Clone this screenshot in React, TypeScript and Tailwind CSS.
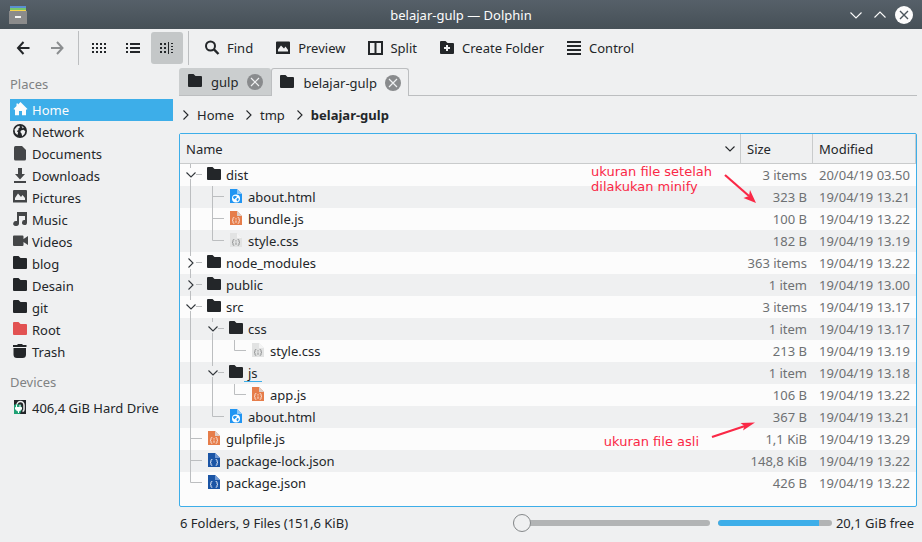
import { useState, type ReactNode } from 'react'
import clsx from 'clsx'

type IconName = 'folder' | 'rootFolder' | 'html' | 'js' | 'css' | 'json'
// one guide cell per indent level
type Guide = 'line' | 'tee' | 'end' | 'open' | 'closed'

interface FileRow {
  id: string
  guides: Guide[]
  icon: IconName
  name: string
  size: string
  modified: string
}

const FILES: FileRow[] = [
  { id: 'dist', guides: ['open'], icon: 'folder', name: 'dist', size: '3 items', modified: '20/04/19 03.50' },
  { id: 'dist/about', guides: ['line', 'tee'], icon: 'html', name: 'about.html', size: '323 B', modified: '19/04/19 13.21' },
  { id: 'dist/bundle', guides: ['line', 'tee'], icon: 'js', name: 'bundle.js', size: '100 B', modified: '19/04/19 13.22' },
  { id: 'dist/style', guides: ['line', 'end'], icon: 'css', name: 'style.css', size: '182 B', modified: '19/04/19 13.19' },
  { id: 'node_modules', guides: ['closed'], icon: 'folder', name: 'node_modules', size: '363 items', modified: '19/04/19 13.22' },
  { id: 'public', guides: ['closed'], icon: 'folder', name: 'public', size: '1 item', modified: '19/04/19 13.00' },
  { id: 'src', guides: ['open'], icon: 'folder', name: 'src', size: '3 items', modified: '19/04/19 13.17' },
  { id: 'src/css', guides: ['line', 'open'], icon: 'folder', name: 'css', size: '1 item', modified: '19/04/19 13.17' },
  { id: 'src/css/style', guides: ['line', 'line', 'end'], icon: 'css', name: 'style.css', size: '213 B', modified: '19/04/19 13.19' },
  { id: 'src/js', guides: ['line', 'open'], icon: 'folder', name: 'js', size: '1 item', modified: '19/04/19 13.18' },
  { id: 'src/js/app', guides: ['line', 'line', 'end'], icon: 'js', name: 'app.js', size: '106 B', modified: '19/04/19 13.22' },
  { id: 'src/about', guides: ['line', 'end'], icon: 'html', name: 'about.html', size: '367 B', modified: '19/04/19 13.21' },
  { id: 'gulpfile', guides: ['tee'], icon: 'js', name: 'gulpfile.js', size: '1,1 KiB', modified: '19/04/19 13.29' },
  { id: 'package-lock', guides: ['tee'], icon: 'json', name: 'package-lock.json', size: '148,8 KiB', modified: '19/04/19 13.22' },
  { id: 'package', guides: ['end'], icon: 'json', name: 'package.json', size: '426 B', modified: '19/04/19 13.22' },
]

function Svg({ children, className }: { children: ReactNode; className?: string }) {
  return (
    <svg viewBox="0 0 16 16" className={clsx('size-4 shrink-0', className)} fill="currentColor" aria-hidden="true">
      {children}
    </svg>
  )
}

function FolderIcon({ className }: { className?: string }) {
  return (
    <Svg className={className}>
      <path d="M1 1a1 1 0 0 1 1-1h4.500l2 2H14a1 1 0 0 1 1 1v9a1 1 0 0 1-1 1H2a1 1 0 0 1-1-1z" />
    </Svg>
  )
}

function PageIcon({ color, fold, children }: { color: string; fold: string; children: ReactNode }) {
  return (
    <Svg>
      <path d="M2 0h7l5 5v9H2z" fill={color} />
      <path d="M9 0l5 5H9z" fill={fold} />
      {children}
    </Svg>
  )
}

function Braces({ color, dot }: { color: string; dot?: boolean }) {
  return (
    <g fill="none" stroke={color} strokeWidth="1">
      <path d="M6.300 6.500h-.6q-.7 0-.7.800v1q0 .9-1 1.100 1 .2 1 1.100v1q0 .8.700.8h.6" />
      <path d="M9.700 6.500h.6q.7 0 .7.800v1q0 .9 1 1.100-1 .2-1 1.100v1q0 .8-.7.800h-.6" />
      {dot && <path d="M8 7.200v1.300M8 9.500v2.300" />}
    </g>
  )
}

function FileIcon({ name }: { name: IconName }) {
  switch (name) {
    case 'html':
      return (
        <PageIcon color="#2195f2" fold="#8ec8f8">
          <circle cx="8" cy="9.500" r="4" fill="#fff" />
          <path d="M5.300 7.500l1.700-.7 1.800.5-.4 1.400-1.300.5.2 1.100-1.300-.3-1-1.200zM9.300 8.900l1.500.5-.2 1.700-1.500 1.300-.7-1.800z" fill="#2195f2" />
        </PageIcon>
      )
    case 'js':
      return (
        <PageIcon color="#e67d4a" fold="#dccfc9">
          <Braces color="#fbe3d8" dot />
        </PageIcon>
      )
    case 'css':
      return (
        <PageIcon color="#e2e3e3" fold="#f4f4f4">
          <Braces color="#8f9091" dot />
        </PageIcon>
      )
    case 'json':
      return (
        <PageIcon color="#1b55a5" fold="#6f98d3">
          <Braces color="#e8effa" />
        </PageIcon>
      )
    case 'rootFolder':
      return <FolderIcon className="text-[#e25252]" />
    default:
      return <FolderIcon className="text-[#232629]" />
  }
}

function PictureIcon() {
  return (
    <Svg>
      <path fillRule="evenodd" d="M1 2.500q0-1 1-1h12q1 0 1 1V14H1zM3 11.500h10V10L10.500 6.500 9 8.500l-3-3-3 4z" />
    </Svg>
  )
}

function ChevronIcon({ d }: { d: string }) {
  return (
    <svg viewBox="0 0 12 12" className="size-3 shrink-0" fill="none" stroke="currentColor" aria-hidden="true">
      <path d={d} strokeWidth="1.100" />
    </svg>
  )
}

function TreeGuide({ kind }: { kind: Guide }) {
  const lines: Record<Guide, string> = {
    line: 'M10.500 0V22',
    tee: 'M10.500 0V22M11 10.500H22',
    end: 'M10.500 0V10.500H22',
    open: 'M10.500 0V4M10.500 15V22M16 10.500H22',
    closed: 'M10.500 0V4M10.500 17V22M16 10.500H22',
  }
  return (
    <svg viewBox="0 0 22 22" className="h-[22px] w-[22px] shrink-0" fill="none" aria-hidden="true">
      <path d={lines[kind]} stroke="#bcbec0" />
      {kind === 'open' && <path d="M6.500 8.500l4.500 4.500 4.500-4.500" stroke="#31363b" strokeWidth="1.100" />}
      {kind === 'closed' && <path d="M8.500 6.500L13 11l-4.500 4.500" stroke="#31363b" strokeWidth="1.100" />}
    </svg>
  )
}

const PLACES: { name: string; icon: ReactNode }[] = [
  { name: 'Home', icon: <Svg><path d="M8.500 0l7 7-.8.800-.7-.6V13.200h-4V9H7v4.200H3V7.200l-.7.600L1.500 7l3-3V1.500H6V2.500z" /></Svg> },
  {
    name: 'Network',
    icon: (
      <Svg className="text-[#232629]">
        <circle cx="8" cy="7" r="7" />
        <path d="M2.500 5.500L5 2.500l2.500-.7.300 1.700-1.600 1.200.4 1.400L4.800 7l1.300 1.500-.6 2.500L3.200 9zM9.500 2l2.300 1.300-1 1.200zM9 6.500l2.500-.8 1.800 1.500-.8 2.800-2.300 2.200-.7-2.700L8.300 8z" fill="#eff0f1" />
      </Svg>
    ),
  },
  { name: 'Documents', icon: <Svg><path d="M2 1.500Q2 0 3.500 0H10l4 4v9q0 1.500-1.500 1.500h-9Q2 14.500 2 13z" /></Svg> },
  { name: 'Downloads', icon: <Svg><path d="M6 0h4v6h3L8 11.500 3 6h3zM2 13h12v2H2z" /></Svg> },
  { name: 'Pictures', icon: <Svg><path fillRule="evenodd" d="M1 1q0-1 1-1h12q1 0 1 1v11.500H1zM3 10h10V8L10.500 5 9 7 6 3.500 3 8z" /></Svg> },
  { name: 'Music', icon: <Svg><path d="M5 0h10v10.500a2.500 2.500 0 1 1-2-2.400V4H7v7.500a2.900 2.500 0 1 1-2-2.400z" /></Svg> },
  { name: 'Videos', icon: <Svg><path d="M1 2.500q0-1 1-1h8.500q1 0 1 1V5L16 2v9l-4.500-3v3q0 1-1 1H2q-1 0-1-1z" /></Svg> },
  { name: 'blog', icon: <FileIcon name="folder" /> },
  { name: 'Desain', icon: <FileIcon name="folder" /> },
  { name: 'git', icon: <FileIcon name="folder" /> },
  { name: 'Root', icon: <FileIcon name="rootFolder" /> },
  { name: 'Trash', icon: <Svg className="text-[#232629]"><path d="M1 1h4l1-1h4l1 1h3.500v2H1zM1.500 4h12.500v6.500Q14 14 10.500 14H5Q1.500 14 1.500 10.500z" /></Svg> },
]

function TitleBar() {
  return (
    <header className="grid h-[29px] grid-cols-[1fr_auto_1fr] items-center bg-linear-to-b from-[#566069] to-[#465057] px-[9px] text-[#fcfcfc]">
      <svg viewBox="0 0 18 18" className="size-[18px]" aria-hidden="true">
        <path d="M1 0h16v3H1z" fill="#5a8fd0" />
        <path d="M1 2h16v2H1z" fill="#77c66a" />
        <path d="M1 4h16v2H1z" fill="#f5d44c" />
        <path d="M0 5h18v13H0z" fill="#8b8b8b" />
        <path d="M6 10h6v2H6z" fill="#f4f4f4" />
      </svg>
      <h1>belajar-gulp — Dolphin</h1>
      <div className="flex items-center justify-end gap-3">
        <button type="button" aria-label="Minimize"><ChevronIcon d="M.5 3.500L6 9l5.500-5.500" /></button>
        <button type="button" aria-label="Maximize"><ChevronIcon d="M.5 8.500L6 3l5.500 5.500" /></button>
        <button type="button" aria-label="Close" className="-ml-[3px]">
          <svg viewBox="0 0 18 18" className="size-[18px]" aria-hidden="true">
            <circle cx="9" cy="9" r="9" fill="#fcfcfc" />
            <path d="M5 5l8 8M13 5l-8 8" stroke="#4b555c" strokeWidth="1.400" />
          </svg>
        </button>
      </div>
    </header>
  )
}

function ToolIconButton({ label, active, onClick, className, children }: { label: string; active?: boolean; onClick?: () => void; className?: string; children: ReactNode }) {
  return (
    <button
      type="button"
      aria-label={label}
      onClick={onClick}
      className={clsx('flex size-8 items-center justify-center rounded-[3px]', active && 'bg-[#c4c7c8]', className)}
    >
      {children}
    </button>
  )
}

function ToolButton({ label, icon }: { label: string; icon: ReactNode }) {
  return (
    <button type="button" className="flex h-8 items-center gap-[7px] px-[11px]">
      {icon}
      {label}
    </button>
  )
}

function Toolbar() {
  const [view, setView] = useState('details')
  return (
    <nav aria-label="Toolbar" className="flex h-[39px] items-center pb-[1px] pl-[7px]">
      <div className="flex gap-[2px]">
        <ToolIconButton label="Back">
          <Svg><path d="M8.500 2L3 8l5.500 6M3 8h11.500" fill="none" stroke="currentColor" strokeWidth="2" /></Svg>
        </ToolIconButton>
        <ToolIconButton label="Forward" className="text-[#8b8e90]">
          <Svg><path d="M8 2l5.500 6L8 14M13.500 8H2" fill="none" stroke="currentColor" strokeWidth="2" /></Svg>
        </ToolIconButton>
      </div>
      <div className="mr-1 ml-[5px] h-[34px] w-px bg-[#bcbec0]" />
      <div className="flex gap-[2px]">
        <ToolIconButton label="Icons" active={view === 'icons'} onClick={() => setView('icons')}>
          <Svg>
            <path d="M1 4h15M1 8h15M1 12h15" stroke="currentColor" strokeWidth="2" strokeDasharray="2 2" />
          </Svg>
        </ToolIconButton>
        <ToolIconButton label="Compact" active={view === 'compact'} onClick={() => setView('compact')}>
          <Svg><path d="M1 3h2v2H1zM5 3h10v2H5zM1 7h2v2H1zM5 7h10v2H5zM1 11h2v2H1zM5 11h10v2H5z" /></Svg>
        </ToolIconButton>
        <ToolIconButton label="Details" active={view === 'details'} onClick={() => setView('details')}>
          <Svg>
            <path d="M1 4h7M1 8h7M1 12h7" stroke="currentColor" strokeWidth="2" strokeDasharray="2 2" />
            <path d="M9 2h1v12H9zM12 3h2v1h-2zM12 6h2v1h-2zM12 9h2v1h-2zM12 12h2v1h-2z" />
          </Svg>
        </ToolIconButton>
      </div>
      <div className="mr-1 ml-[5px] h-[34px] w-px bg-[#bcbec0]" />
      <ToolButton
        label="Find"
        icon={<Svg><circle cx="6.500" cy="6" r="4.500" fill="none" stroke="currentColor" strokeWidth="2" /><path d="M9.700 9.200l4.800 4.800" stroke="currentColor" strokeWidth="2.400" /></Svg>}
      />
      <ToolButton label="Preview" icon={<PictureIcon />} />
      <ToolButton
        label="Split"
        icon={<Svg><path fillRule="evenodd" d="M1 1h15v14H1zM3 3v10h4.500V3zM9.500 3v10H14V3z" /></Svg>}
      />
      <ToolButton
        label="Create Folder"
        icon={<Svg><path fillRule="evenodd" d="M1 2q0-1 1-1h4.500l2 2H14q1 0 1 1v9q0 1-1 1H2q-1 0-1-1zM7 5v2H5v2h2v2h2V9h2V7H9V5z" /></Svg>}
      />
      <ToolButton
        label="Control"
        icon={<Svg><path d="M1 1h14v2H1zM1 5h14v2H1zM1 9h14v2H1zM1 13h14v2H1z" /></Svg>}
      />
    </nav>
  )
}

function Sidebar() {
  return (
    <aside className="w-[173px] shrink-0 pl-[10px]">
      <h2 className="flex h-[31px] items-center text-[#7f8283]">Places</h2>
      <ul>
        {PLACES.map((place, i) => (
          <li key={place.name}>
            <a
              href="#"
              className={clsx('flex h-[22px] items-center gap-1 pl-[2px]', i === 0 ? 'bg-[#3daee9] text-[#fcfcfc]' : 'text-[#232629]')}
            >
              <span className={clsx(i > 0 && 'text-[#444648]')}>{place.icon}</span>
              {place.name}
            </a>
          </li>
        ))}
      </ul>
      <h2 className="flex h-[34px] items-center pt-[4px] text-[#7f8283]">Devices</h2>
      <a href="#" className="flex h-[22px] items-center gap-1 pl-[2px]">
        <Svg>
          <path d="M2 0h12v14H2z" fill="#232629" />
          <path d="M5 6V5a3.500 3.500 0 0 1 7 0v4.500q0 1.500-1.500 2" fill="none" stroke="#eff0f1" strokeWidth="1.500" />
          <path d="M2 5l2-1 5 1 1 4-2 5H2z" fill="#1fa174" />
          <path d="M4.500 4.500v3M8 4.500v3M3.500 7.500h6v1.500l-2 2h-2l-2-2zM6.500 11v2" fill="#fff" stroke="#fff" strokeWidth="1" />
        </Svg>
        406,4 GiB Hard Drive
      </a>
    </aside>
  )
}

function Tab({ name, active }: { name: string; active?: boolean }) {
  return (
    <div
      className={clsx(
        'flex h-7 items-center rounded-t-[3px] border-[#bcbec0]',
        active ? 'gap-2 border-x border-t px-[7px]' : 'gap-[9px] border-b bg-[#cbcecf] px-2',
      )}
    >
      <button type="button" role="tab" aria-selected={!!active} className="flex items-center gap-2">
        <FolderIcon className="text-[#232629]" />
        {name}
      </button>
      <button type="button" aria-label={`Close ${name}`}>
        <Svg>
          <circle cx="8" cy="8" r="8" fill="#898b8d" />
          <path d="M4 4l8 8M12 4l-8 8" stroke="#eff0f1" strokeWidth="1.200" />
        </Svg>
      </button>
    </div>
  )
}

function Breadcrumb() {
  const crumbs = ['Home', 'tmp', 'belajar-gulp']
  return (
    <nav aria-label="Breadcrumb" className="flex h-[37px] items-center gap-[9px] pl-[1px]">
      {crumbs.map((crumb, i) => (
        <div key={crumb} className="flex items-center gap-[5px]">
          <ChevronIcon d="M3.500 1.500L8 6l-4.500 4.500" />
          <a href="#" className={clsx(i === crumbs.length - 1 && 'font-bold')}>{crumb}</a>
        </div>
      ))}
    </nav>
  )
}

function FileTable() {
  return (
    <div className="relative flex-1 rounded-[2px] border border-[#3daee9] bg-[#fcfcfc]">
      <table className="w-full table-fixed border-separate border-spacing-0">
        <colgroup>
          <col />
          <col className="w-[72px]" />
          <col className="w-[104px]" />
        </colgroup>
        <thead>
          <tr className="h-[30px] bg-[#eff0f1] text-left">
            <th className="border-b border-[#c9cbcc] py-0 pr-1 pl-[6px] font-normal">
              <div className="flex items-center justify-between">
                Name
                <ChevronIcon d="M1.500 3.500L6 8l4.500-4.500" />
              </div>
            </th>
            <th className="border-b border-l border-[#c9cbcc] px-[6px] py-0 font-normal">Size</th>
            <th className="border-x border-b border-[#c9cbcc] px-[6px] py-0 font-normal">Modified</th>
          </tr>
        </thead>
        <tbody>
          {FILES.map((file) => (
            <tr key={file.id} className="h-[22px] even:bg-[#eff0f1]">
              <td className="p-0">
                <div className="flex h-[22px] items-center">
                  {file.guides.map((guide, i) => (
                    <TreeGuide key={i} kind={guide} />
                  ))}
                  <span className="pl-1"><FileIcon name={file.icon} /></span>
                  <span className={clsx('px-1 leading-[18px]', file.id === 'src/js' && 'shadow-[inset_0_-1px_0_#3daee9]')}>
                    {file.name}
                  </span>
                </div>
              </td>
              <td className="p-0 pr-[5px] text-right leading-[18px] whitespace-nowrap text-[#6e7173]">{file.size}</td>
              <td className="p-0 pl-[7px] leading-[18px] whitespace-nowrap text-[#6e7173]">{file.modified}</td>
            </tr>
          ))}
        </tbody>
      </table>

      {/* Notes over the list */}
      <div className="pointer-events-none absolute top-[30px] right-[158px] flex gap-3 font-['DejaVu_Sans',sans-serif] text-[13px] leading-[15px] text-[#fa2846]">
        <p className="whitespace-nowrap">
          ukuran file setelah
          <br />
          dilakukan minify
        </p>
        <svg viewBox="0 0 34 32" className="mt-[9px] h-8 w-[34px]" fill="currentColor" aria-hidden="true">
          <path d="M1 2l24 21" stroke="currentColor" strokeWidth="2.200" />
          <path d="M32 30l-12.500-5 5.500-2 1-6z" />
        </svg>
      </div>
      <div className="pointer-events-none absolute top-[284px] right-[161px] flex gap-3 font-['DejaVu_Sans',sans-serif] text-[13px] leading-[15px] text-[#fa2846]">
        <p className="pt-4 whitespace-nowrap">ukuran file asli</p>
        <svg viewBox="0 0 44 22" className="h-[22px] w-11" fill="currentColor" aria-hidden="true">
          <path d="M1 19L34 8" stroke="currentColor" strokeWidth="2.200" />
          <path d="M44 4.500L32 12.500 33.500 8l-4-3z" />
        </svg>
      </div>
    </div>
  )
}

function StatusBar() {
  const [zoom, setZoom] = useState(0)
  return (
    <footer className="flex h-[35px] items-center pr-[3px] pb-[3px] pl-[1px]">
      <p className="flex-1">6 Folders, 9 Files (151,6 KiB)</p>
      <input
        type="range"
        aria-label="Zoom"
        min={0}
        max={16}
        value={zoom}
        onChange={(e) => setZoom(Number(e.target.value))}
        className="h-[18px] w-[197px] appearance-none bg-transparent [&::-webkit-slider-runnable-track]:h-[6px] [&::-webkit-slider-runnable-track]:rounded-full [&::-webkit-slider-runnable-track]:bg-[#b2b4b5] [&::-webkit-slider-thumb]:-mt-[6px] [&::-webkit-slider-thumb]:size-[18px] [&::-webkit-slider-thumb]:appearance-none [&::-webkit-slider-thumb]:rounded-full [&::-webkit-slider-thumb]:border [&::-webkit-slider-thumb]:border-[#85888a] [&::-webkit-slider-thumb]:bg-[#eff0f1]"
      />
      <div className="ml-2 h-[6px] w-[114px] overflow-hidden rounded-full bg-[#b2b4b5]">
        <div className="h-full w-[89%] rounded-l-full bg-[#3daee9]" />
      </div>
      <p className="ml-1">20,1 GiB free</p>
    </footer>
  )
}

export default function App() {
  return (
    <div className="flex min-h-screen flex-col bg-[#eff0f1] font-['Noto_Sans',sans-serif] text-[13px] leading-[18px] text-[#232629]">
      <TitleBar />
      <Toolbar />
      <div className="flex flex-1 gap-[6px] pr-[5px]">
        <Sidebar />
        <main className="flex min-w-0 flex-1 flex-col">
          <div role="tablist" className="flex">
            <Tab name="gulp" />
            <Tab name="belajar-gulp" active />
            <div className="flex-1 border-b border-[#bcbec0]" />
          </div>
          <Breadcrumb />
          <FileTable />
          <StatusBar />
        </main>
      </div>
    </div>
  )
}
